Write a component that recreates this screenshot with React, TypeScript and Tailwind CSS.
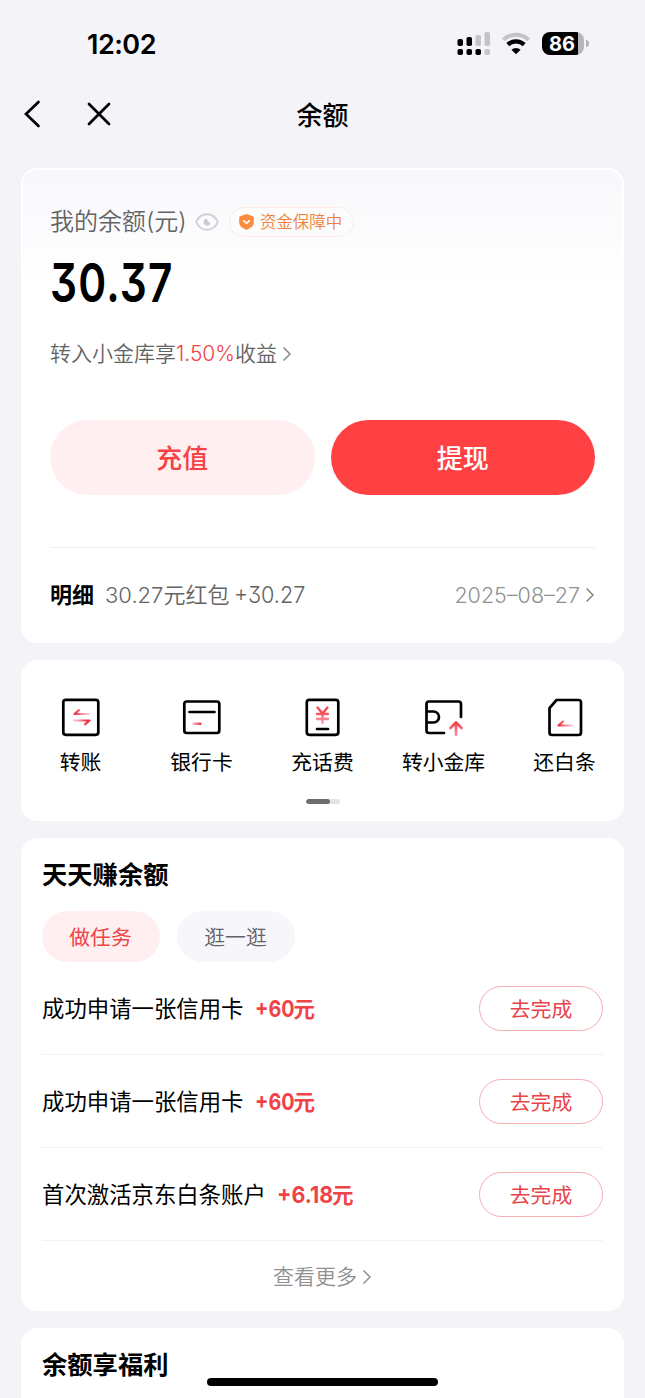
import type { ReactNode } from "react";

const CJK = "font-['Inter','Noto_Sans_CJK_SC',sans-serif]";

function Chevron({ className }: { className: string }) {
  return (
    <svg viewBox="0 0 10 16" className={className} fill="none" stroke="currentColor" strokeWidth="1.5">
      <path d="M1.5 1.5 8 8l-6.5 6.5" />
    </svg>
  );
}

function StatusBar() {
  return (
    <div className="flex h-[84px] shrink-0 items-start justify-between pl-[87px] pr-[56px]">
      <div className="mt-[30px] text-[27px] leading-[30px] font-semibold tracking-[-0.5px]">12:02</div>
      <div className="mt-[31px] flex items-start">
        <svg width="34" height="25" viewBox="0 0 34 25" className="mr-[11px]">
          <g fill="#000">
            <rect x="0.500" y="8" width="5.500" height="7" rx="1.8" />
            <rect x="9.500" y="6" width="5.500" height="9" rx="1.8" />
            <rect x="0.500" y="18" width="5.500" height="6" rx="1.8" />
            <rect x="9.500" y="18" width="5.500" height="6" rx="1.8" />
            <rect x="18.500" y="18" width="5.500" height="6" rx="1.8" />
          </g>
          <g fill="#c4c4c8">
            <rect x="18.500" y="4" width="5.500" height="11" rx="1.8" />
            <rect x="27.500" y="1" width="5.500" height="14" rx="1.8" />
            <rect x="27.500" y="18" width="5.500" height="6" rx="1.8" />
          </g>
        </svg>
        <svg width="28" height="25" viewBox="0 0 28 25" className="mr-[12px]" fill="none">
          <path d="M1.3 8.8a18.5 18.5 0 0 1 25.4 0" stroke="#c4c4c8" strokeWidth="4" />
          <path d="M5.8 13.600a12 12 0 0 1 16.400 0" stroke="#000" strokeWidth="4.200" />
          <path d="M14 23.300 9.400 18.700a6.800 6.800 0 0 1 9.200 0Z" fill="#000" />
        </svg>
        <div className="mt-px flex items-center">
          <div className="flex h-[23px] w-[42px] items-center overflow-hidden rounded-[8px] bg-[linear-gradient(to_right,#000_36px,#b5b5ba_36px)] pt-px pl-[7px] text-[20px] leading-[23px] font-bold text-white">
            86
          </div>
          <div className="ml-[2px] h-[7px] w-[3px] rounded-r-full bg-[#b5b5ba]" />
        </div>
      </div>
    </div>
  );
}

function NavBar() {
  return (
    <div className="grid h-[60px] shrink-0 grid-cols-[1fr_auto_1fr] items-center">
      <div className="flex items-center gap-[45px] pl-[23px]">
        <svg width="18" height="28" viewBox="0 0 18 28" fill="none" stroke="#000" strokeWidth="2.7" strokeLinecap="round">
          <path d="M15.5 2 3 14l12.500 12" />
        </svg>
        <svg width="26" height="26" viewBox="0 0 26 26" fill="none" stroke="#000" strokeWidth="2.7" strokeLinecap="round">
          <path d="m3 3 20 20M23 3 3 23" />
        </svg>
      </div>
      <h1 className="pt-[3px] text-[26px] leading-[30px] font-medium">余额</h1>
    </div>
  );
}

function BalanceCard() {
  return (
    <section className="flex h-[475px] shrink-0 flex-col rounded-[16px] border-2 border-white bg-[linear-gradient(to_bottom,#f8f8fc,#fff_120px)] px-[27px]">
      <div className="mt-[37px] flex h-[30px] items-center">
        <span className="text-[24px] leading-[30px] font-[350] text-[#636363]">我的余额(元)</span>
        <svg width="24" height="18" viewBox="0 0 24 18" className="ml-[8px]" fill="none">
          <path d="M1.200 9C5.500-1.300 18.500-1.300 22.800 9 18.500 19.300 5.500 19.300 1.200 9Z" stroke="#d0d0d3" strokeWidth="1.900" />
          <path d="M12.200 5.800A3.300 3.300 0 1 0 15.300 9.500 3 3 0 0 1 12.200 5.800Z" fill="#c8c8cc" />
        </svg>
        <span className="ml-[10px] flex h-[30px] w-[125px] items-center rounded-full border border-[#fcece3] bg-[#fdfcfd] pl-[9px] text-[16.500px] leading-[28px] font-[350] text-[#ee8440]">
          <svg width="15" height="16" viewBox="0 0 15 16" className="mr-[6px] shrink-0">
            <path d="M7.500 0 14 2.200q.800.300.800 1.300v5q0 3.300-3 5L7.500 16l-4.300-2.500q-3-1.700-3-5v-5Q.200 2.500 1 2.200Z" fill="#fb8c3e" />
            <path d="m4.400 6.300 3.100 3 3.100-3" stroke="#fff" strokeWidth="1.700" fill="none" />
          </svg>
          资金保障中
        </span>
      </div>
      <div className="mt-[19px] h-[54px] w-[124px]">
        <span className="inline-block origin-left scale-x-[0.785] text-[54px] leading-[54px] font-semibold tracking-[1.500px] [font-feature-settings:'cv09']">30.37</span>
      </div>
      <div className="mt-[30px] flex h-[28px] shrink-0 items-center text-[21px] leading-[28px] font-[350] text-[#636363]">
        转入小金库享<span className="text-[#f04348]">1.50%</span>收益
        <Chevron className="ml-[5px] h-[16px] w-[10px] text-[#888]" />
      </div>
      <div className="mt-[52px] grid h-[75px] shrink-0 grid-cols-2 gap-[16px] text-[26px] font-medium">
        <button className="rounded-full bg-[#ffeff0] pt-px text-[#f64246]">充值</button>
        <button className="rounded-full bg-[#ff4144] pt-px text-white">提现</button>
      </div>
      <div className="mt-[52px] flex h-[94px] shrink-0 items-center border-t border-[#f0f0f2] pt-px text-[22px]">
        <span className="font-bold">明细</span>
        <span className="ml-[11px] font-[350] text-[#636363]">30.27元红包</span>
        <span className="ml-[5px] flex w-[70px] font-[350] text-[#636363]">
          <span className="inline-block origin-left scale-x-[0.94] text-[23px] [font-feature-settings:'cv09']">+30.27</span>
        </span>
        <span className="ml-auto text-[21.500px] font-[350] text-[#909090]">2025–08–27</span>
        <Chevron className="ml-[5px] h-[16px] w-[10px] text-[#888]" />
      </div>
    </section>
  );
}

function ServiceIcon({ children }: { children: ReactNode }) {
  return (
    <svg width="40" height="40" viewBox="0.500 0 40 40" fill="none" stroke="#000" strokeWidth="2.700" strokeLinejoin="round" strokeLinecap="round">
      {children}
    </svg>
  );
}

const services = [
  {
    label: "转账",
    icon: (
      <>
        <rect x="2.800" y="2.800" width="35" height="35" rx="2.500" />
        <path d="M28.500 17H14l4.500-3.800" stroke="url(#fadeRight)" strokeWidth="2.200" />
        <path d="M13.500 23.500H29l-4.500 3.800" stroke="url(#fadeLeft)" strokeWidth="2.200" />
      </>
    ),
  },
  {
    label: "银行卡",
    icon: (
      <>
        <rect x="2.800" y="4.500" width="35" height="31.500" rx="2.500" />
        <path d="M8 15h25" />
        <rect x="11" y="25.500" width="9" height="2.600" rx="1" fill="url(#fadeCard)" stroke="none" />
      </>
    ),
  },
  {
    label: "充话费",
    icon: (
      <>
        <rect x="4.300" y="2.800" width="31.500" height="35" rx="2.500" />
        <path d="m15 10.500 5 6 5-6M14.500 17h11M14.500 22h11M20 16.500v9.500" stroke="url(#fadeDown)" strokeWidth="2.300" />
        <path d="M14.500 32h11" />
      </>
    ),
  },
  {
    label: "转小金库",
    icon: (
      <>
        <path d="M37.500 20V7q0-2.500-2.500-2.500H5.500Q3 4.500 3 7v26.500Q3 36 5.500 36h15M3 14.500h7a5.500 5.500 0 0 1 0 11H3" />
        <path d="M32.500 38V26M27 31l5.500-5.500L38 31" stroke="url(#fadeDownLow)" />
      </>
    ),
  },
  {
    label: "还白条",
    icon: (
      <>
        <path d="M12 3h22q2.500 0 2.500 2.500v30q0 2.500-2.500 2.500H7.500Q5 38 5 35.500V11.200Z" />
        <path d="M27.500 28.500H14l4.500-4" stroke="url(#fadeRight)" strokeWidth="2.200" />
      </>
    ),
  },
];

function Services() {
  return (
    <section className="flex h-[161px] shrink-0 flex-col items-center rounded-[16px] bg-white">
      <svg width="0" height="0" className="absolute">
        <defs>
          <linearGradient id="fadeRight" gradientUnits="userSpaceOnUse" x1="15" y1="0" x2="30" y2="0">
            <stop stopColor="#ef3340" />
            <stop offset="1" stopColor="#ff8fac" stopOpacity=".35" />
          </linearGradient>
          <linearGradient id="fadeLeft" gradientUnits="userSpaceOnUse" x1="11" y1="0" x2="26" y2="0">
            <stop stopColor="#ff8fac" stopOpacity=".35" />
            <stop offset="1" stopColor="#ef3340" />
          </linearGradient>
          <linearGradient id="fadeCard" gradientUnits="userSpaceOnUse" x1="9" y1="0" x2="19" y2="0">
            <stop stopColor="#ff8fac" stopOpacity=".35" />
            <stop offset="1" stopColor="#ef3340" />
          </linearGradient>
          <linearGradient id="fadeDown" gradientUnits="userSpaceOnUse" x1="0" y1="15" x2="0" y2="27">
            <stop stopColor="#f5484d" />
            <stop offset="1" stopColor="#ffa5b9" />
          </linearGradient>
          <linearGradient id="fadeDownLow" gradientUnits="userSpaceOnUse" x1="0" y1="25" x2="0" y2="39">
            <stop stopColor="#f04045" />
            <stop offset="1" stopColor="#ff94ad" />
          </linearGradient>
        </defs>
      </svg>
      <div className="mt-[37px] grid w-full grid-cols-[119px_123px_119px_123px_119px]">
        {services.map((s) => (
          <div key={s.label} className="flex flex-col items-center">
            <ServiceIcon>{s.icon}</ServiceIcon>
            <span className="mt-[12px] text-[20.800px] leading-[28px] whitespace-nowrap">{s.label}</span>
          </div>
        ))}
      </div>
      <div className="mt-[22px] h-[5px] w-[34px] overflow-hidden rounded-full bg-[#e4e4e5]">
        <div className="h-full w-[24px] rounded-full bg-[#6e6e70]" />
      </div>
    </section>
  );
}

const tasks = [
  { title: "成功申请一张信用卡", amount: "+60", fit: "w-[39px]", stretch: "scale-x-[0.86]" },
  { title: "成功申请一张信用卡", amount: "+60", fit: "w-[39px]", stretch: "scale-x-[0.86]" },
  { title: "首次激活京东白条账户", amount: "+6.18", fit: "w-[55px]", stretch: "scale-x-[0.93]" },
];

function Tasks() {
  return (
    <section className="flex h-[473px] shrink-0 flex-col rounded-[16px] bg-white px-[21px]">
      <h2 className="mt-[21px] text-[25.300px] leading-[32px] font-bold">天天赚余额</h2>
      <div className="mt-[20px] flex gap-[17px] text-[20.800px]">
        <button className="h-[51px] w-[118px] rounded-full bg-[#ffeff0] pt-[2px] pr-[7px] pl-[6px] text-[#f04348]">做任务</button>
        <button className="h-[51px] w-[118px] rounded-full bg-[#f6f6fb] pt-[2px] pr-[7px] pl-[6px] font-[350] text-[#636363]">逛一逛</button>
      </div>
      {tasks.map((t, i) => (
        <div key={i} className="flex h-[93px] shrink-0 items-center border-b border-[#f2f2f4]">
          <span className="pt-[2px] text-[22.400px]">{t.title}</span>
          <span className={`ml-[11px] flex pt-[2px] font-bold text-[#f04348] ${t.fit}`}>
            <span className={`inline-block origin-left text-[23px] ${t.stretch}`}>{t.amount}</span>
          </span>
          <span className="pt-[2px] text-[21.500px] font-bold text-[#f04348]">元</span>
          <button className="ml-auto h-[45px] w-[124px] rounded-full border border-[#f6aeb4] pt-[3px] text-[20.800px] text-[#e9434a]">
            去完成
          </button>
        </div>
      ))}
      <div className="flex h-[71px] shrink-0 items-center justify-center text-[21px] font-[350] text-[#909090]">
        查看更多
        <Chevron className="ml-[5px] h-[16px] w-[10px]" />
      </div>
    </section>
  );
}

export default function App() {
  return (
    <main className={`relative flex h-[1398px] w-[645px] flex-col overflow-hidden bg-[#f3f3f8] text-black ${CJK}`}>
      <StatusBar />
      <NavBar />
      <div className="mt-[24px] flex flex-col gap-[17px] px-[21px]">
        <BalanceCard />
        <Services />
        <Tasks />
        <section className="h-[100px] shrink-0 rounded-[16px] bg-white px-[21px]">
          <h2 className="mt-[21px] text-[25.300px] leading-[32px] font-bold">余额享福利</h2>
        </section>
      </div>
      <div className="absolute bottom-[12px] left-[207px] h-[8px] w-[231px] rounded-full bg-black" />
    </main>
  );
}
